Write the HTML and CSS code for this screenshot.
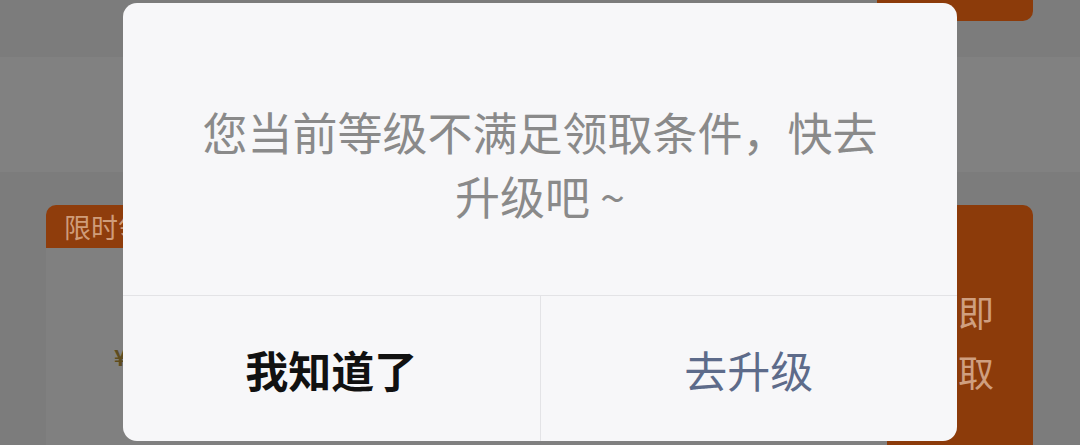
FILE: index.html
```html
<!DOCTYPE html>
<html>
<head>
	<meta name="viewport" content="width=device-width, initial-scale=1">
	<title>等级提示</title>
<link rel="stylesheet" href="styles.css">
</head>

<body>

<div class="page">
	<div class="top-row">
		<div class="top-btn"></div>
	</div>
	<div class="band"></div>

	<div class="card">
		<div class="card-main">
			<div class="tag">限时领取</div>
			<div class="card-body"><span class="price">¥</span></div>
		</div>
		<div class="card-btn">立即领取</div>
	</div>
</div>

<!-- dialog over the page -->
<div class="dialog">
	<div class="dialog-msg">您当前等级不满足领取条件，快去升级吧 ~</div>
	<div class="dialog-actions">
		<div class="action action-cancel">我知道了</div>
		<div class="action action-ok">去升级</div>
	</div>
</div>

</body>
</html>
```

FILE: styles.css
```css
body{
	margin: 0;
	padding: 0;
	width: 1080px;
	height: 445px;
	overflow: hidden;
	background-color: #7c7c7c;
	font-family: "Noto Sans CJK SC", "Noto Sans", sans-serif;
	position: relative;
}

.top-row{
	height: 57px;
	display: flex;
	justify-content: flex-end;
	padding-right: 47px;
}
.top-btn{
	width: 156px;
	height: 21px;
	background-color: #8c3b0a;
	border-radius: 0 0 10px 10px;
}

.band{
	height: 115px;
	background-color: #818181;
}

.card{
	display: flex;
	margin: 33px 47px 0 46px;
	height: 240px;
}
.card-main{
	flex: 1;
	display: flex;
	flex-direction: column;
}
.tag{
	width: 130px;
	height: 43px;
	line-height: 43px;
	padding-left: 18px;
	box-sizing: border-box;
	background-color: #8f3d0c;
	border-radius: 10px 0 0 0;
	color: #cf9c7a;
	font-size: 27px;
	white-space: nowrap;
	overflow: hidden;
}
.card-body{
	flex: 1;
	background-color: #808080;
	padding: 92px 0 0 68px;
}
.price{
	color: #5e4c1e;
	font-size: 22px;
	font-weight: bold;
}
.card-btn{
	width: 146px;
	box-sizing: border-box;
	padding: 76px 33px 0 31px;
	background-color: #8c3b0a;
	border-radius: 0 10px 0 0;
	color: #cf9f80;
	font-size: 36px;
	letter-spacing: 4px;
	line-height: 60px;
	text-align: left;
}

.dialog{
	position: absolute;
	left: 123px;
	top: 3px;
	width: 834px;
	height: 438px;
	background-color: #f7f7f9;
	border-radius: 14px;
	overflow: hidden;
	display: flex;
	flex-direction: column;
}
.dialog-msg{
	flex: 1;
	padding: 97px 72px 0;
	text-align: center;
	font-size: 45px;
	line-height: 64px;
	color: #8a8a8a;
}
.dialog-actions{
	height: 145px;
	border-top: 1px solid #e3e3e6;
	display: flex;
}
.action{
	flex: 1;
	display: flex;
	align-items: center;
	justify-content: center;
	font-size: 43px;
}
.action + .action{
	border-left: 1px solid #e3e3e6;
}
.action-cancel{
	color: #111;
	font-weight: bold;
}
.action-ok{
	color: #5d6b8a;
}
```
